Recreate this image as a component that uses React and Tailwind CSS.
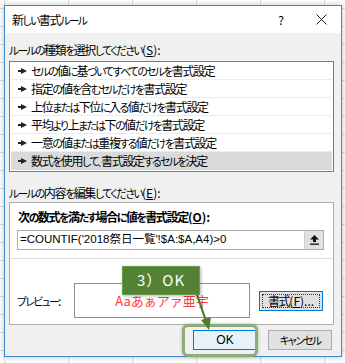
import React from 'react'

const rules = [
  'セルの値に基づいてすべてのセルを書式設定',
  '指定の値を含むセルだけを書式設定',
  '上位または下位に入る値だけを書式設定',
  '平均より上または下の値だけを書式設定',
  '一意の値または重複する値だけを書式設定',
  '数式を使用して、書式設定するセルを決定'
]

// kana in the dialog font are narrower and smaller than kanji
function J({ t }) {
  return t.split(/([\u3000-\u30ff]+)/).map((p, i) =>
    /[\u3000-\u30ff]/.test(p) ? (
      <span key={i} className="text-[10.8px] tracking-[-1.6px]">{p}</span>
    ) : (
      <span key={i} className="tracking-[-1.3px]">{p}</span>
    )
  )
}

function Pointer() {
  return (
    <svg width="9" height="6" viewBox="0 0 9 6" className="shrink-0">
      <rect x="0" y="2" width="4" height="2" fill="#222" />
      <polygon points="3,0 9,3 3,6" fill="#222" />
    </svg>
  )
}

export default function App() {
  return (
    <div className="relative w-[345px] h-[363px] overflow-hidden bg-white bg-[linear-gradient(to_right,#dadada_1px,transparent_1px),linear-gradient(to_bottom,#dadada_1px,transparent_1px)] bg-[size:64px_18px] bg-[position:4px_8px] pt-[5px] pl-[4px] font-['Noto_Sans_CJK_JP',sans-serif] text-black">
      <div className="w-[338px] h-[352px] border border-[#3d8ad0] bg-[#f0f0f0] flex flex-col shadow-[0_0_6px_rgba(0,0,0,0.25)]">
        {/* title bar */}
        <div className="h-[27px] bg-white flex items-center shrink-0">
          <div className="flex-1 pl-[7px] text-[12px] [font-feature-settings:'palt']"><J t="新しい書式ルール" /></div>
          <div className="w-[40px] text-center text-[12px]">?</div>
          <div className="w-[40px] flex justify-center">
            <svg width="11" height="11" viewBox="0 0 11 11">
              <path d="M0.5 0.5 L10.5 10.5 M10.5 0.5 L0.5 10.5" stroke="#222" strokeWidth="1" />
            </svg>
          </div>
        </div>

        {/* body */}
        <div className="flex flex-col pl-[4px] text-[12px] [font-feature-settings:'palt']">
          <div className="pt-[9px] h-[25px] leading-[16px]">
            <J t="ルールの種類を選択してください" />(<span className="underline">S</span>):
          </div>

          <div className="mt-[3px] w-[325px] h-[111px] border border-[#7a7a7a] bg-white pb-[1px]">
            {rules.map((r, i) => (
              <div
                key={i}
                className={
                  i === rules.length - 1
                    ? 'h-[18px] mx-[1px] flex items-center gap-[4px] pl-[7px] bg-[#dadada]'
                    : 'h-[18px] mx-[1px] flex items-center gap-[4px] pl-[7px] border-b border-[#ececec]'
                }
              >
                <Pointer />
                <span className="leading-[16px]"><J t={r} /></span>
              </div>
            ))}
          </div>

          <div className="mt-[13px] h-[16px] leading-[16px]">
            <J t="ルールの内容を編集してください" />(<span className="underline">E</span>):
          </div>

          <div className="mt-[1px] w-[325px] h-[123px] border border-[#adadad] bg-white flex flex-col">
            <div className="pt-[6px] pl-[8px] h-[22px] leading-[16px] font-bold">
              <J t="次の数式を満たす場合に値を書式設定" />(<span className="underline">O</span>):
            </div>
            <div className="mt-[5px] ml-[7px] w-[307px] h-[20px] border border-[#adadad] flex items-stretch">
              <div className="flex-1 flex items-center pl-[2px] text-[11.5px] font-['Liberation_Sans','Noto_Sans_CJK_JP',sans-serif] [font-feature-settings:normal]">
                =COUNTIF('2018祭日一覧'!$A:$A,A4)&gt;0
              </div>
              <div className="w-[19px] bg-[#e1e1e1] border-l border-[#cfcfcf] flex items-center justify-center">
                <svg width="9" height="10" viewBox="0 0 9 10">
                  <polygon points="4.5,0 9,4.5 6,4.5 6,7 3,7 3,4.5 0,4.5" fill="#111" />
                  <rect x="0" y="8.5" width="9" height="1.3" fill="#111" />
                </svg>
              </div>
            </div>
            <div className="mt-[8px] h-px bg-[#dcdcdc]" />
            <div className="mt-[24px] flex items-center pl-[7px]">
              <div className="w-[57px]"><J t="プレビュー" />:</div>
              <div className="w-[176px] h-[35px] border border-[#8f8f8f] flex items-center justify-center text-[13px] text-[#ff3b3b] [font-feature-settings:normal]">
                Aaあぁアァ亜宇
              </div>
              <div className="ml-[9px] w-[64px] h-[20px] border border-[#0078d7] bg-[#e1e1e1] p-[2px]">
                <div className="w-full h-full border border-dotted border-[#333] flex items-center justify-center leading-none">
                  <J t="書式" />(<span className="underline">F</span>)...
                </div>
              </div>
            </div>
          </div>

          <div className="mt-[5px] flex justify-end gap-[11px] pr-[9px]">
            <div className="w-[64px] h-[20px] border border-[#0078d7] bg-[#e5f1fb] flex items-center justify-center font-['Liberation_Sans',sans-serif]">
              OK
            </div>
            <div className="w-[64px] h-[20px] border border-[#adadad] bg-[#e1e1e1] flex items-center justify-center">
              <J t="キャンセル" />
            </div>
          </div>
        </div>
      </div>

      {/* annotation overlays */}
      <div className="absolute left-[182px] top-[324px] w-[76px] h-[33px] border-[3px] border-[#8fac7b] rounded-[6px] shadow-[0_0_3px_rgba(80,110,60,0.5)]" />
      <svg className="absolute left-0 top-0" width="345" height="363" viewBox="0 0 345 363">
        <line x1="196" y1="292" x2="206" y2="321" stroke="#4f7b2e" strokeWidth="2.2" />
        <polygon points="209,330 201,320 211,317" fill="#4f7b2e" />
      </svg>
      <div className="absolute left-[122px] top-[266px] w-[78px] h-[29px] bg-[#548235] border border-[#6e9a4d] shadow-[1px_1px_3px_rgba(0,0,0,0.3)] flex items-center justify-center text-white text-[15px] tracking-[1px]">
        3）OK
      </div>
    </div>
  )
}
